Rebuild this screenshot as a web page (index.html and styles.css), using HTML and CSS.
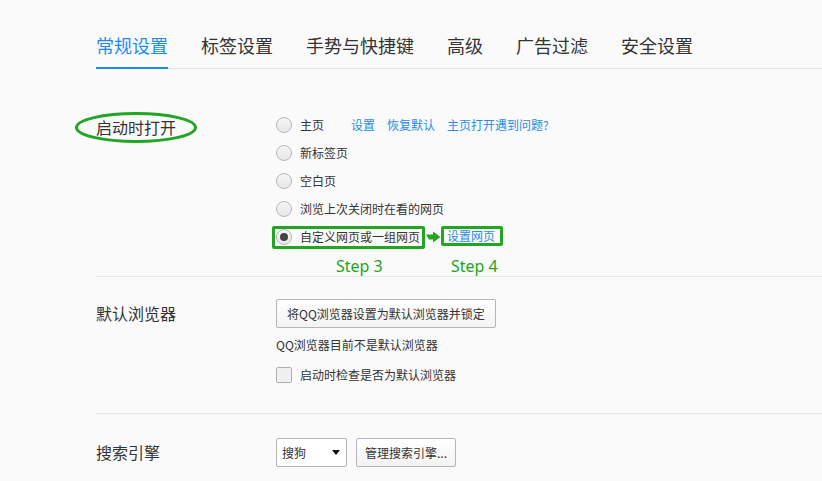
FILE: index.html
```html
<!DOCTYPE html>
<html lang="zh-CN">
<head>
<meta charset="utf-8">
<title>设置</title>
<link rel="stylesheet" href="styles.css">
</head>
<body>
<div class="page">
  <nav class="tabs">
    <span class="tab active">常规设置</span>
    <span class="tab">标签设置</span>
    <span class="tab">手势与快捷键</span>
    <span class="tab">高级</span>
    <span class="tab">广告过滤</span>
    <span class="tab">安全设置</span>
  </nav>

  <section class="section s-startup">
    <div class="label first">
      <span class="label-text">启动时打开</span>
      <svg class="ellipse" width="122" height="31" viewBox="0 0 122 31"><ellipse cx="61" cy="15.5" rx="59.5" ry="14" fill="none" stroke="#22a522" stroke-width="3"/></svg>
    </div>
    <div class="controls">
      <div class="opt">
        <span class="radio"></span><span class="opt-text">主页</span>
        <span class="links"><a class="link">设置</a><a class="link">恢复默认</a><a class="link">主页打开遇到问题?</a></span>
      </div>
      <div class="opt"><span class="radio"></span><span class="opt-text">新标签页</span></div>
      <div class="opt"><span class="radio"></span><span class="opt-text">空白页</span></div>
      <div class="opt"><span class="radio"></span><span class="opt-text">浏览上次关闭时在看的网页</span></div>
      <div class="opt">
        <span class="hl hl-a"><span class="radio checked"></span><span class="opt-text">自定义网页或一组网页</span></span>
        <svg class="arrow" width="16" height="12" viewBox="0 0 16 12"><path d="M1 3.5 L8 3.5 L8 0.5 L15.5 6 L8 11.5 L8 8.5 L4 8.5 Z" fill="#22a522"/></svg>
        <span class="hl hl-b"><a class="link">设置网页</a></span>
      </div>
      <div class="steps"><span class="step step3">Step 3</span><span class="step">Step 4</span></div>
    </div>
  </section>

  <section class="section s-default">
    <div class="label btn-label">默认浏览器</div>
    <div class="controls">
      <button class="btn btn-default">将QQ浏览器设置为默认浏览器并锁定</button>
      <div class="note">QQ浏览器目前不是默认浏览器</div>
      <div class="check-row"><span class="checkbox"></span><span class="opt-text">启动时检查是否为默认浏览器</span></div>
    </div>
  </section>

  <section class="section s-search">
    <div class="label btn-label">搜索引擎</div>
    <div class="controls row">
      <div class="select"><span>搜狗</span><span class="caret"></span></div>
      <button class="btn btn-manage">管理搜索引擎...</button>
    </div>
  </section>
</div>
</body>
</html>
```

FILE: styles.css
```css
html, body {
  margin: 0;
  padding: 0;
  background: #fafafa;
}
body {
  font-family: "Noto Sans CJK SC", "Noto Sans", sans-serif;
  color: #333;
  width: 822px;
  height: 481px;
  overflow: hidden;
}
.page {
  margin-left: 96px;
}
.tabs {
  display: flex;
  gap: 33px;
  padding-top: 33px;
  border-bottom: 1px solid #e6e6e6;
}
.tab {
  font-size: 18px;
  line-height: 24px;
  padding-bottom: 10px;
  color: #333;
  border-bottom: 2px solid transparent;
  margin-bottom: -1px;
  white-space: nowrap;
}
.tab.active {
  color: #1a8cf5;
  border-bottom-color: #1a8cf5;
}
.section {
  display: flex;
  border-bottom: 1px solid #e8e8e8;
}
.label {
  width: 180px;
  flex: none;
  font-size: 16px;
  color: #333;
  position: relative;
}
.label.first {
  line-height: 28px;
  margin-top: 2px;
}
.label-text {
  position: relative;
}
.ellipse {
  position: absolute;
  left: -21px;
  top: -1px;
}
.controls {
  display: flex;
  flex-direction: column;
  font-size: 12px;
}
.controls.row {
  flex-direction: row;
  gap: 9px;
}
.s-startup {
  padding-top: 42px;
}
.opt {
  display: flex;
  align-items: center;
  height: 28px;
}
.radio {
  width: 14px;
  height: 14px;
  border: 1px solid #b8b8b8;
  border-radius: 50%;
  background: linear-gradient(#f4f4f4, #e8e8e8);
  margin-right: 8px;
  flex: none;
  position: relative;
}
.radio.checked::after {
  content: "";
  position: absolute;
  left: 3px;
  top: 3px;
  width: 8px;
  height: 8px;
  border-radius: 50%;
  background: #444;
}
.opt-text {
  font-size: 12px;
  line-height: 18px;
  color: #333;
  white-space: nowrap;
}
.links {
  display: flex;
  gap: 12px;
  margin-left: 27px;
}
.link {
  color: #2b8ce8;
  font-size: 12px;
  line-height: 18px;
  white-space: nowrap;
  cursor: pointer;
}
.hl {
  display: flex;
  align-items: center;
  border: 3px solid #22a522;
  border-radius: 2px;
}
.hl-a {
  margin-left: -4px;
  padding: 0 2px 0 1px;
  height: 17px;
}
.hl-b {
  padding: 0 5px 0 3px;
  height: 14px;
  margin-top: -3px;
}
.arrow {
  flex: none;
}
.steps {
  display: flex;
  margin-top: 5px;
  height: 20px;
  font-family: "Noto Sans", "Open Sans", sans-serif;
  font-size: 16px;
  line-height: 20px;
  color: #22a522;
}
.step3 {
  margin-left: 60px;
  width: 115px;
}
.s-default {
  padding-top: 22px;
  padding-bottom: 28px;
}
.btn-label {
  line-height: 29px;
}
.btn {
  font-family: "Noto Sans CJK SC", "Noto Sans", sans-serif;
  font-size: 12px;
  color: #333;
  height: 29px;
  border: 1px solid #b5b5b5;
  border-radius: 2px;
  background: linear-gradient(#ffffff, #f3f3f3);
  padding: 0 9px;
  align-self: flex-start;
  white-space: nowrap;
}
.btn-default {
  padding: 0 10px;
}
.note {
  margin-top: 8px;
  line-height: 18px;
  color: #333;
}
.check-row {
  display: flex;
  align-items: center;
  height: 20px;
  margin-top: 11px;
}
.checkbox {
  width: 14px;
  height: 14px;
  border: 1px solid #b0b0b0;
  border-radius: 2px;
  background: #f0f0f0;
  margin-right: 8px;
}
.s-search {
  padding-top: 24px;
  border-bottom: none;
  height: 60px;
}
.select {
  width: 58px;
  height: 27px;
  border: 1px solid #b5b5b5;
  border-radius: 2px;
  background: #fff;
  display: flex;
  align-items: center;
  justify-content: space-between;
  padding: 0 6px 0 5px;
  font-size: 12px;
}
.caret {
  width: 0;
  height: 0;
  border-left: 4.5px solid transparent;
  border-right: 4.5px solid transparent;
  border-top: 5px solid #111;
}
.btn-manage {
  padding: 0 8px;
}
```
